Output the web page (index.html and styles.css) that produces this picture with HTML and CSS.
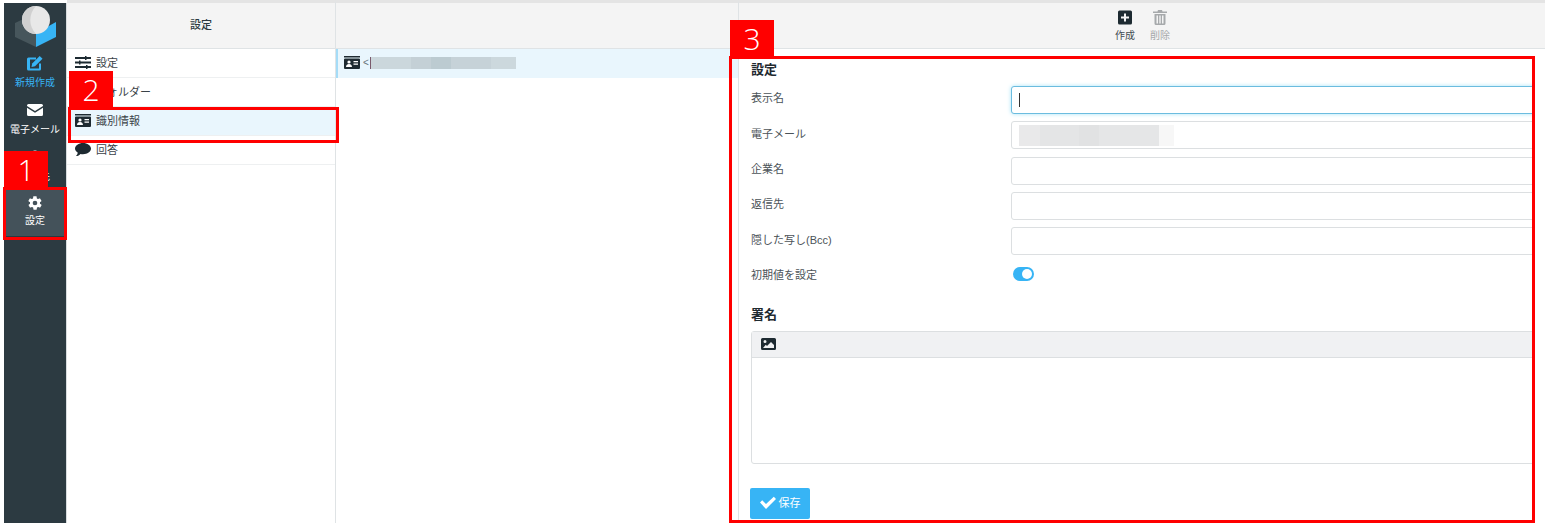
FILE: index.html
```html
<!DOCTYPE html>
<html lang="ja">

<head>
    <meta charset="utf-8">
    <meta name="viewport" content="width=device-width, initial-scale=1.0">
    <title>設定</title>
    <link rel="stylesheet" href="styles.css">
</head>

<body>
    <div class="app">
        <nav class="sidebar">
            <div class="logo">
                <svg width="44" height="44" viewBox="0 0 44 44">
                    <polygon points="2,18 23,8 23,42 2,32" fill="#47565c" />
                    <polygon points="23,28 43,17 43,32 23,42" fill="#37b4f5" />
                    <circle cx="23" cy="15" r="14" fill="#e8e8e8" />
                    <path d="M23 1a14 14 0 0 0 0 28a20 20 0 0 1 0-28z" fill="#d0d0d0" />
                </svg>
            </div>
            <a class="nav-item nav-compose">
                <svg width="16" height="15" viewBox="0 0 16 15">
                    <path d="M2 2h7v2H3v9h9V8h2v5.500a1.500 1.500 0 0 1-1.500 1.500h-11A1.500 1.500 0 0 1 0 13.500v-10A1.500 1.500 0 0 1 1.500 2z" fill="currentColor" />
                    <path d="M12.700 0.500l2.800 2.800-7.500 7.500-3.500 0.700 0.700-3.500z" fill="currentColor" />
                </svg>
                <span>新規作成</span>
            </a>
            <a class="nav-item">
                <svg width="16" height="12" viewBox="0 0 16 12">
                    <path d="M1.500 0h13A1.500 1.500 0 0 1 16 1.500v.5L8 7 0 2v-.5A1.500 1.500 0 0 1 1.500 0z" fill="currentColor" />
                    <path d="M0 3.800l8 5 8-5v6.700a1.500 1.500 0 0 1-1.500 1.500h-13A1.500 1.500 0 0 1 0 10.500z" fill="currentColor" />
                </svg>
                <span>電子メール</span>
            </a>
            <a class="nav-item">
                <svg width="14" height="14" viewBox="0 0 14 14">
                    <circle cx="7" cy="4" r="3.500" fill="currentColor" />
                    <path d="M0 14c0-4 3-6 7-6s7 2 7 6z" fill="currentColor" />
                </svg>
                <span>連絡先</span>
            </a>
            <a class="nav-item nav-active">
                <svg width="16" height="16" viewBox="0 0 24 24">
                    <path d="M19.400 13c.1-.3.100-.7.100-1s0-.7-.1-1l2.100-1.600c.2-.2.200-.4.100-.6l-2-3.500c-.1-.2-.4-.3-.6-.2l-2.500 1c-.5-.4-1.100-.7-1.700-1l-.4-2.600c0-.3-.2-.5-.5-.5h-4c-.3 0-.5.200-.5.500l-.4 2.600c-.6.300-1.200.6-1.700 1l-2.500-1c-.2-.1-.5 0-.6.200l-2 3.500c-.1.200-.1.400.1.600L4.600 11c-.1.300-.1.700-.1 1s0 .7.100 1l-2.100 1.600c-.2.200-.2.400-.1.600l2 3.500c.1.200.4.300.6.200l2.500-1c.5.400 1.100.7 1.700 1l.4 2.600c0 .3.200.5.500.5h4c.3 0 .5-.2.500-.5l.4-2.600c.6-.3 1.200-.6 1.700-1l2.500 1c.2.100.5 0 .6-.2l2-3.500c.1-.2.100-.4-.1-.6zM12 15.500a3.500 3.500 0 1 1 0-7 3.500 3.500 0 0 1 0 7z" fill="currentColor" />
                </svg>
                <span>設定</span>
            </a>
        </nav>

        <section class="pane pane-menu">
            <header class="pane-head">設定</header>
            <ul class="list">
                <li class="list-row">
                    <svg class="row-icon" width="16" height="13" viewBox="0 0 16 13">
                        <path d="M0 1h16v2H0zM0 5.500h16v2H0zM0 10h16v2H0z" fill="#1d2a31" />
                        <path d="M10 0h1.500v4H10zM4 4.500h1.500v4H4zM11 9h1.500v4H11z" fill="#1d2a31" />
                    </svg>
                    設定
                </li>
                <li class="list-row">
                    <svg class="row-icon" width="16" height="13" viewBox="0 0 16 13">
                        <path d="M0 1.500h6l2 2h8V13H0z" fill="#1d2a31" />
                    </svg>
                    フォルダー
                </li>
                <li class="list-row list-row-active">
                    <svg class="row-icon" width="16" height="13" viewBox="0 0 16 13">
                        <use href="#id-card" />
                    </svg>
                    識別情報
                </li>
                <li class="list-row">
                    <svg class="row-icon" width="16" height="13" viewBox="0 0 16 13">
                        <path d="M8 0c4.400 0 8 2.500 8 5.600s-3.600 5.600-8 5.600c-.9 0-1.700-.1-2.500-.3C4.500 12 3 13 1 13c1-.9 1.600-2 1.800-3.300C1.100 8.700 0 7.300 0 5.600 0 2.500 3.600 0 8 0z" fill="#1d2a31" />
                    </svg>
                    回答
                </li>
            </ul>
        </section>

        <section class="pane pane-identities">
            <header class="pane-head"></header>
            <div class="identity-row">
                <svg class="row-icon" width="16" height="13" viewBox="0 0 16 13">
                    <symbol id="id-card" viewBox="0 0 16 13">
                        <path d="M0 0h16v1.500H0zM1 2.500h14a1 1 0 0 1 1 1V12a1 1 0 0 1-1 1H1a1 1 0 0 1-1-1V3.500a1 1 0 0 1 1-1z" fill="#1d2a31" />
                        <circle cx="5" cy="6" r="1.600" fill="#fff" />
                        <path d="M2 11c0-2 1.300-3 3-3s3 1 3 3zM9.500 5H14v1.200H9.500zM9.500 7.500H14v1.200H9.500z" fill="#fff" />
                    </symbol>
                    <use href="#id-card" />
                </svg>
                <span class="identity-text">&lt;</span>
                <span class="blur blur-identity"></span>
            </div>
        </section>

        <section class="pane pane-detail">
            <header class="pane-head toolbar">
                <a class="tool">
                    <svg width="14" height="14" viewBox="0 0 14 14">
                        <path d="M1.500 0h11A1.500 1.500 0 0 1 14 1.500v11a1.500 1.500 0 0 1-1.500 1.500h-11A1.500 1.500 0 0 1 0 12.500v-11A1.500 1.500 0 0 1 1.500 0zM6 3v3H3v2h3v3h2V8h3V6H8V3z" fill="#1d2a31" fill-rule="evenodd" />
                    </svg>
                    <span>作成</span>
                </a>
                <a class="tool tool-disabled">
                    <svg width="14" height="15" viewBox="0 0 14 15">
                        <path d="M5 0h4l.5 1.500H14V3H0V1.500h4.500zM1.500 4h11v9.500a1.500 1.500 0 0 1-1.500 1.500H3a1.500 1.500 0 0 1-1.500-1.500zM3.500 5.500v8h1.500v-8zM6.300 5.500v8h1.400v-8zM9 5.500v8h1.500v-8z" fill="currentColor" fill-rule="evenodd" />
                    </svg>
                    <span>削除</span>
                </a>
            </header>

            <form class="form">
                <h3 class="form-title">設定</h3>
                <div class="field">
                    <label class="field-label">表示名</label>
                    <div class="input input-focus"><span class="caret"></span></div>
                </div>
                <div class="field">
                    <label class="field-label">電子メール</label>
                    <div class="input"><span class="blur blur-email"></span></div>
                </div>
                <div class="field">
                    <label class="field-label">企業名</label>
                    <div class="input"></div>
                </div>
                <div class="field">
                    <label class="field-label">返信先</label>
                    <div class="input"></div>
                </div>
                <div class="field">
                    <label class="field-label">隠した写し(Bcc)</label>
                    <div class="input"></div>
                </div>
                <div class="field field-toggle">
                    <label class="field-label">初期値を設定</label>
                    <span class="toggle"><span class="toggle-knob"></span></span>
                </div>

                <h3 class="form-title form-title-sign">署名</h3>
                <div class="editor">
                    <div class="editor-bar">
                        <svg width="15" height="12" viewBox="0 0 15 12">
                            <path d="M1.500 0h12A1.500 1.500 0 0 1 15 1.500v9a1.500 1.500 0 0 1-1.500 1.500h-12A1.500 1.500 0 0 1 0 10.500v-9A1.500 1.500 0 0 1 1.500 0zM4 2a1.500 1.500 0 1 0 0 3 1.500 1.500 0 0 0 0-3zM2 10h11V7L10 4 6 8 4.800 6.800z" fill="#1d2a31" fill-rule="evenodd" />
                        </svg>
                    </div>
                    <div class="editor-body"></div>
                </div>

                <button class="save" type="button">
                    <svg width="16" height="13" viewBox="0 0 16 13">
                        <path d="M2.200 4.300L6 8 13.800.8 16 3 6 13 0 6.500z" fill="#fff" />
                    </svg>
                    保存
                </button>
            </form>
        </section>

        <div class="mark mark-box-1"></div>
        <div class="mark mark-box-2"></div>
        <div class="mark mark-box-3"></div>
        <div class="mark-num mark-num-1">1</div>
        <div class="mark-num mark-num-2">2</div>
        <div class="mark-num mark-num-3">3</div>
    </div>
</body>

</html>
```

FILE: styles.css
```css
* {
    box-sizing: border-box;
}

body {
    margin: 0;
    background-color: #fff;
    color: #3a4248;
    font-family: "Liberation Sans", "Noto Sans CJK JP", sans-serif;
    font-size: 11px;
    overflow: hidden;
}

.app {
    position: relative;
    display: flex;
    width: 1545px;
    height: 523px;
    padding-left: 4px;
    overflow: hidden;
}

/* left nav */
.sidebar {
    flex: none;
    width: 63px;
    margin-top: 3px;
    background-color: #2c3a41;
    border-right: 1px solid #d8dcde;
    color: #fff;
}

.logo {
    display: flex;
    justify-content: center;
    height: 47px;
    padding-top: 2px;
}

.nav-item {
    display: flex;
    flex-direction: column;
    align-items: center;
    gap: 5px;
    height: 47px;
    padding-top: 5px;
    font-size: 10px;
    line-height: 13px;
}

.nav-item svg {
    display: block;
    height: 16px;
}

.nav-compose {
    color: #37b4f5;
}

.nav-active {
    gap: 3px;
    margin-top: -1px;
    background-color: #44525a;
    border-bottom: 1px solid #2c3a41;
}

/* columns */
.pane {
    border-top: 3px solid #e4e4e4;
    border-right: 1px solid #dfe3e5;
}

.pane-menu {
    flex: none;
    width: 269px;
}

.pane-identities {
    flex: none;
    width: 403px;
}

.pane-detail {
    flex: 1;
    border-right: none;
    display: flex;
    flex-direction: column;
    min-width: 0;
}

.pane-head {
    display: flex;
    align-items: center;
    justify-content: center;
    flex: none;
    height: 46px;
    padding-bottom: 3px;
    background-color: #f4f4f4;
    border-bottom: 1px solid #dfe3e5;
    color: #2c3a41;
    font-size: 11px;
    font-weight: 500;
}

.list {
    list-style: none;
    margin: 0;
    padding: 0;
}

.list-row {
    display: flex;
    align-items: center;
    gap: 5px;
    height: 29px;
    padding-left: 8px;
    padding-bottom: 2px;
    border-bottom: 1px solid #eef0f1;
}

.list-row-active {
    background-color: #e9f6fd;
}

.row-icon {
    flex: none;
}

.identity-row {
    display: flex;
    align-items: center;
    height: 29px;
    padding-left: 6px;
    padding-bottom: 2px;
    background-color: #e9f6fd;
    border-left: 2px solid #a5dcf7;
}

.identity-text {
    margin-left: 3px;
    color: #66727a;
    font-size: 10px;
}

.blur {
    display: block;
    height: 12px;
}

.blur-identity {
    width: 146px;
    margin-left: 1px;
    border-left: 1px solid #7a5a6c;
    background: linear-gradient(to right, #cbd7dc 0 40px, #c4d0d6 40px 60px, #bccbd1 60px 80px, #c6d2d8 80px 120px, #ccd8dd 120px 145px);
}

.blur-email {
    width: 155px;
    height: 21px;
    background: linear-gradient(to right, #e9e9ea 0 21px, #e4e5e6 21px 60px, #e1e2e3 60px 80px, #e5e6e7 80px 140px, #f7f7f7 140px 155px);
}

/* detail toolbar */
.toolbar {
    justify-content: flex-start;
    align-items: flex-start;
    gap: 15px;
    padding-top: 7px;
    padding-bottom: 0;
    padding-left: 376px;
}

.tool {
    display: flex;
    flex-direction: column;
    align-items: center;
    gap: 5px;
    color: #434c52;
    font-size: 10px;
    line-height: 12px;
    font-weight: 400;
}

.tool svg {
    display: block;
    height: 15px;
}

.tool-disabled {
    color: #a6a9ab;
}

/* form */
.form {
    flex: 1;
    padding: 12px 0 0 12px;
    margin-right: 11px;
    overflow: hidden;
}

.form-title {
    margin: 0;
    color: #1f2a30;
    font-size: 13px;
    line-height: 18px;
    font-weight: 700;
}

.field {
    display: flex;
    align-items: center;
    margin-top: 7.300px;
    height: 28px;
}

.form-title + .field {
    margin-top: 7px;
}

.field-label {
    flex: none;
    width: 260px;
    padding-bottom: 5px;
    color: #4b5358;
    font-size: 11px;
}

.form-title + .field .field-label {
    padding-bottom: 6px;
}

.input {
    display: flex;
    align-items: center;
    flex: 1;
    height: 28px;
    padding-left: 7px;
    margin-right: -3px;
    background-color: #fff;
    border: 1px solid #dcdfe1;
    border-radius: 3px 0 0 3px;
}

.input-focus {
    border-color: #6bbcdf;
    box-shadow: 0 0 4px #a8e4f7;
}

.caret {
    width: 1px;
    height: 14px;
    background-color: #333;
}

.field-toggle {
    margin-top: 4.800px;
}

.field-toggle .field-label {
    padding-bottom: 0;
}

.toggle {
    display: flex;
    justify-content: flex-end;
    align-items: center;
    width: 21px;
    height: 14px;
    margin-left: 2px;
    padding-right: 2px;
    background-color: #37b4f5;
    border-radius: 7px;
}

.toggle-knob {
    width: 10px;
    height: 10px;
    background-color: #fff;
    border-radius: 50%;
}

.form-title-sign {
    margin-top: 18px;
}

.editor {
    margin-top: 7px;
    margin-right: -3px;
    border: 1px solid #dcdfe1;
    border-radius: 3px 0 0 3px;
}

.editor-bar {
    display: flex;
    align-items: center;
    height: 26px;
    padding-left: 9px;
    background-color: #f0f1f3;
    border-bottom: 1px solid #dcdfe1;
}

.editor-body {
    height: 105px;
}

.save {
    display: flex;
    align-items: center;
    justify-content: center;
    gap: 3px;
    width: 60px;
    height: 31px;
    margin-top: 24px;
    margin-left: -1px;
    padding: 0 0 2px;
    background-color: #37b4f5;
    border: none;
    border-radius: 2px;
    color: #fff;
    font-family: inherit;
    font-size: 11px;
}

/* red annotations laid over the screenshot */
.mark {
    position: absolute;
    border: 3px solid #f00;
}

.mark-box-1 {
    left: 3px;
    top: 187px;
    width: 64px;
    height: 53px;
}

.mark-box-2 {
    left: 68px;
    top: 107px;
    width: 271px;
    height: 36px;
}

.mark-box-3 {
    left: 729px;
    top: 56px;
    width: 806px;
    height: 467px;
}

.mark-num {
    position: absolute;
    width: 44px;
    height: 37px;
    background-color: #f00;
    color: #fff;
    font-family: "Open Sans", sans-serif;
    font-size: 30px;
    font-weight: 300;
    line-height: 37px;
    text-align: center;
}

.mark-num-1 {
    left: 4px;
    top: 151px;
}

.mark-num-2 {
    left: 69px;
    top: 71px;
}

.mark-num-3 {
    left: 730px;
    top: 20px;
}
```
